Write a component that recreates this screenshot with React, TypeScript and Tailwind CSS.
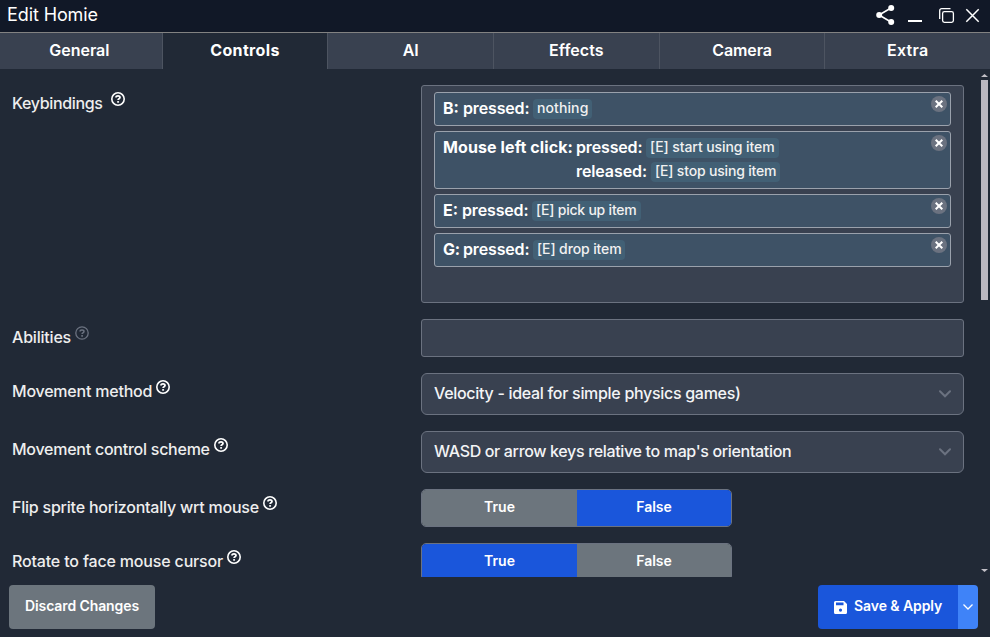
import React from "react";

const tabs = [
  { name: "General", cls: "font-semibold tracking-[0px]" },
  { name: "Controls", cls: "font-bold tracking-[0.35px]" },
  { name: "AI", cls: "font-semibold tracking-[-0.1px]" },
  { name: "Effects", cls: "font-semibold tracking-[0.05px]" },
  { name: "Camera", cls: "font-semibold tracking-[-0.1px]" },
  { name: "Extra", cls: "font-semibold tracking-[0.3px]" },
];

function Help({ dim = false, cls = "" }: { dim?: boolean; cls?: string }) {
  return (
    <svg
      viewBox="0 0 14 14"
      className={`h-[14px] w-[14px] shrink-0 ${dim ? "text-[#6b7280]" : "text-white"} ${cls}`}
      fill="none"
      stroke="currentColor"
    >
      <circle cx="7" cy="7" r="6.2" strokeWidth={dim ? 1.3 : 1.6} />
      <path d="M5 5.6C5 4.4 5.9 3.9 7 3.9s2 .6 2 1.6c0 1.300-1.900 1.300-1.900 2.500" strokeWidth={dim ? 1.5 : 1.8} />
      <path d="M7.1 9.1v1.600" strokeWidth={dim ? 1.6 : 1.9} />
    </svg>
  );
}

function Row({
  label,
  cls,
  dim,
  iconCls = "ml-1",
  children,
}: {
  label: string;
  cls: string;
  dim?: boolean;
  iconCls?: string;
  children: React.ReactNode;
}) {
  return (
    <div className="flex shrink-0">
      <div className="flex w-[409px] shrink-0 items-start">
        <span className={`mt-[6px] text-[16px] leading-6 font-medium whitespace-nowrap text-[#eeeeee] ${cls}`}>
          {label}
        </span>
        <Help dim={dim} cls={`mt-[7px] ${iconCls}`} />
      </div>
      {children}
    </div>
  );
}

function Tag({ text, cls }: { text: string; cls: string }) {
  return (
    <span
      className={`ml-1 h-5 shrink-0 rounded-[4px] bg-[#426075] pl-1 text-[14px] leading-[18px] font-medium whitespace-nowrap text-[#f1f1f1] ${cls}`}
    >
      {text}
    </span>
  );
}

type Line = { event: string; eventCls: string; action: string; actionCls: string };

function Binding({ name, nameCls, lines }: { name: string; nameCls: string; lines: Line[] }) {
  return (
    <div className="flex rounded-[3px] border border-[#9aa1ac] bg-[#3e5266] py-1 pr-[3px] pl-2">
      <span className={`-mt-px shrink-0 text-[16px] leading-6 font-bold whitespace-nowrap text-white ${nameCls}`}>
        {name}
      </span>
      <div className="flex-1">
        {lines.map((l) => (
          <div key={l.event} className="flex h-6 items-center">
            <span
              className={`shrink-0 pb-0.5 text-[16px] leading-6 font-semibold whitespace-nowrap text-white ${l.eventCls}`}
            >
              {l.event}
            </span>
            <Tag text={l.action} cls={l.actionCls} />
          </div>
        ))}
      </div>
      <span className="-mt-px flex h-4 w-4 items-center justify-center rounded-full bg-[#6b7280]">
        <svg viewBox="0 0 8 8" className="h-2 w-2" stroke="white" strokeWidth="2">
          <path d="M.7.7l6.600 6.600M7.300.7L.7 7.300" />
        </svg>
      </span>
    </div>
  );
}

function Select({ text, cls }: { text: string; cls: string }) {
  return (
    <div className="flex h-[42px] w-[543px] items-center justify-between rounded-[6px] border border-[#6b7280] bg-[#394150] pr-[11px] pl-3">
      <span className={`pb-0.5 text-[16px] leading-6 font-medium whitespace-nowrap text-[#f3f4f6] ${cls}`}>{text}</span>
      <svg viewBox="0 0 14 8" className="h-2 w-[14px]" fill="none" stroke="#6b7280" strokeWidth="2" strokeLinecap="round">
        <path d="M2 1.300l5 5 5-5" />
      </svg>
    </div>
  );
}

function Toggle({ value }: { value: boolean }) {
  return (
    <div className="flex h-[38px] w-[311px] overflow-hidden rounded-[5px] border border-[#6b7280] text-[14px] font-semibold text-white">
      <div className={`flex w-[155px] items-center justify-center pb-[3px] ${value ? "bg-[#1a56db]" : "bg-[#6c757d]"}`}>
        True
      </div>
      <div className={`flex flex-1 items-center justify-center pb-[3px] ${value ? "bg-[#6c757d]" : "bg-[#1a56db]"}`}>
        False
      </div>
    </div>
  );
}

export default function App() {
  return (
    <div className="flex h-[637px] w-[990px] flex-col overflow-hidden bg-[#212936] font-['Inter',sans-serif]">
      <header className="flex h-[33px] shrink-0 items-start border-b border-[#828282] bg-[#111827] pl-[7px]">
        <span className="mt-[3px] flex-1 text-[18px] leading-6 tracking-[-0.1px] text-white">Edit Homie</span>
        <svg viewBox="0 0 114 32" className="h-8 w-[114px]" fill="none" stroke="white">
          <path d="M15 8L3 15l12 7" strokeWidth="1.600" />
          <g fill="white" stroke="none">
            <circle cx="15.200" cy="8" r="3" />
            <circle cx="3.200" cy="15" r="3" />
            <circle cx="15.200" cy="22" r="3" />
          </g>
          <path d="M32 21h14" strokeWidth="2" />
          <rect x="66.600" y="11.600" width="10.800" height="10.800" rx="1.800" strokeWidth="1.300" />
          <path d="M63.700 19V10.700a2 2 0 0 1 2-2H74.500" strokeWidth="1.300" />
          <path d="M90.300 9.300l12.400 12.400M102.700 9.300L90.300 21.700" strokeWidth="1.500" />
        </svg>
      </header>

      <nav className="-ml-[3px] flex h-9 w-[993px] shrink-0">
        {tabs.map((t, i) => (
          <div
            key={t.name}
            className={`flex flex-1 justify-center ${i < 5 ? "border-r border-[#4d5461]" : ""} ${i === 1 ? "bg-[#212936]" : "bg-[#394150]"}`}
          >
            <span className={`mt-[5px] text-[16px] leading-6 text-white ${t.cls}`}>{t.name}</span>
          </div>
        ))}
      </nav>

      <div className="flex min-h-0 flex-1">
        <main className="flex flex-1 flex-col gap-4 overflow-hidden pt-4 pl-3">
          <Row label="Keybindings" cls="tracking-[-0.35px]" iconCls="ml-2">
            <div className="flex h-[218px] w-[543px] flex-col gap-[5px] rounded-[3px] border border-[#6b7280] bg-[#394150] px-3 pt-[6px]">
              <Binding
                name="B:"
                nameCls="w-5"
                lines={[{ event: "pressed:", eventCls: "w-[66px] tracking-[-0.15px]", action: "nothing", actionCls: "w-[59px] tracking-[0.1px]" }]}
              />
              <Binding
                name="Mouse left click:"
                nameCls="w-[133px] tracking-[0.1px]"
                lines={[
                  { event: "pressed:", eventCls: "w-[66px] tracking-[-0.15px]", action: "[E] start using item", actionCls: "w-[133px] tracking-[-0.08px]" },
                  { event: "released:", eventCls: "w-[71px] tracking-[-0.1px]", action: "[E] stop using item", actionCls: "w-[129px] tracking-[-0.18px]" },
                ]}
              />
              <Binding
                name="E:"
                nameCls="w-[19px]"
                lines={[{ event: "pressed:", eventCls: "w-[66px] tracking-[-0.15px]", action: "[E] pick up item", actionCls: "w-[109px] tracking-[-0.22px]" }]}
              />
              <Binding
                name="G:"
                nameCls="w-5 tracking-[-0.3px]"
                lines={[{ event: "pressed:", eventCls: "w-[66px] tracking-[-0.15px]", action: "[E] drop item", actionCls: "w-[92px] tracking-[-0.12px]" }]}
              />
            </div>
          </Row>
          <Row label="Abilities" cls="tracking-[-0.2px]" dim iconCls="ml-[3.5px]">
            <div className="h-[38px] w-[543px] rounded-[3px] border border-[#6b7280] bg-[#394150]" />
          </Row>
          <Row label="Movement method" cls="tracking-[-0.22px]">
            <Select text="Velocity - ideal for simple physics games)" cls="tracking-[-0.3px]" />
          </Row>
          <Row label="Movement control scheme" cls="tracking-[-0.25px]">
            <Select text="WASD or arrow keys relative to map's orientation" cls="tracking-[-0.34px]" />
          </Row>
          <Row label="Flip sprite horizontally wrt mouse" cls="tracking-[-0.22px]">
            <Toggle value={false} />
          </Row>
          <Row label="Rotate to face mouse cursor" cls="tracking-[-0.17px]">
            <Toggle value={true} />
          </Row>
        </main>
        <div className="flex w-[9px] shrink-0 flex-col items-start">
          <span className="mt-[5px] h-[3px] w-[7px] bg-[#c1bfc6] [clip-path:polygon(50%_0,100%_100%,0_100%)]" />
          <span className="mt-[3px] h-[220px] w-[7px] bg-[#bbb8c1]" />
          <span className="mt-auto mb-[5px] h-[3px] w-[7px] bg-[#c1bfc6] [clip-path:polygon(0_0,100%_0,50%_100%)]" />
        </div>
      </div>

      <footer className="flex h-[60px] shrink-0 items-start justify-between pt-2 pr-3 pl-[9px] text-[14px] font-semibold text-white">
        <button className="flex h-11 w-[146px] items-center justify-center rounded-[4px] bg-[#6c757d] pb-[3px]">
          <span className="tracking-[-0.1px] whitespace-nowrap">Discard Changes</span>
        </button>
        <div className="flex h-11 w-40 overflow-hidden rounded-[4px]">
          <button className="flex w-[140px] items-center bg-[#1a56db] pl-4">
            <svg viewBox="0 0 13 13" className="h-[13px] w-[13px]">
              <path
                fillRule="evenodd"
                fill="white"
                d="M1.500 0h8.500L13 3v8.500a1.500 1.500 0 0 1-1.500 1.500h-10A1.500 1.500 0 0 1 0 11.500v-10A1.500 1.500 0 0 1 1.500 0zM2 1.500v2.700h7.500V1.500zM6.500 7.500a1.600 1.600 0 1 0 0 3.200 1.600 1.600 0 0 0 0-3.200z"
              />
            </svg>
            <span className="ml-[7px] pb-[3px] tracking-[-0.08px] whitespace-nowrap">Save &amp; Apply</span>
          </button>
          <button className="flex w-5 items-center justify-center bg-[#3f83f8]">
            <svg viewBox="0 0 10 6" className="h-[6px] w-[10px]" fill="none" stroke="white" strokeWidth="1.300">
              <path d="M.5.5L5 5 9.500.5" />
            </svg>
          </button>
        </div>
      </footer>
    </div>
  );
}
